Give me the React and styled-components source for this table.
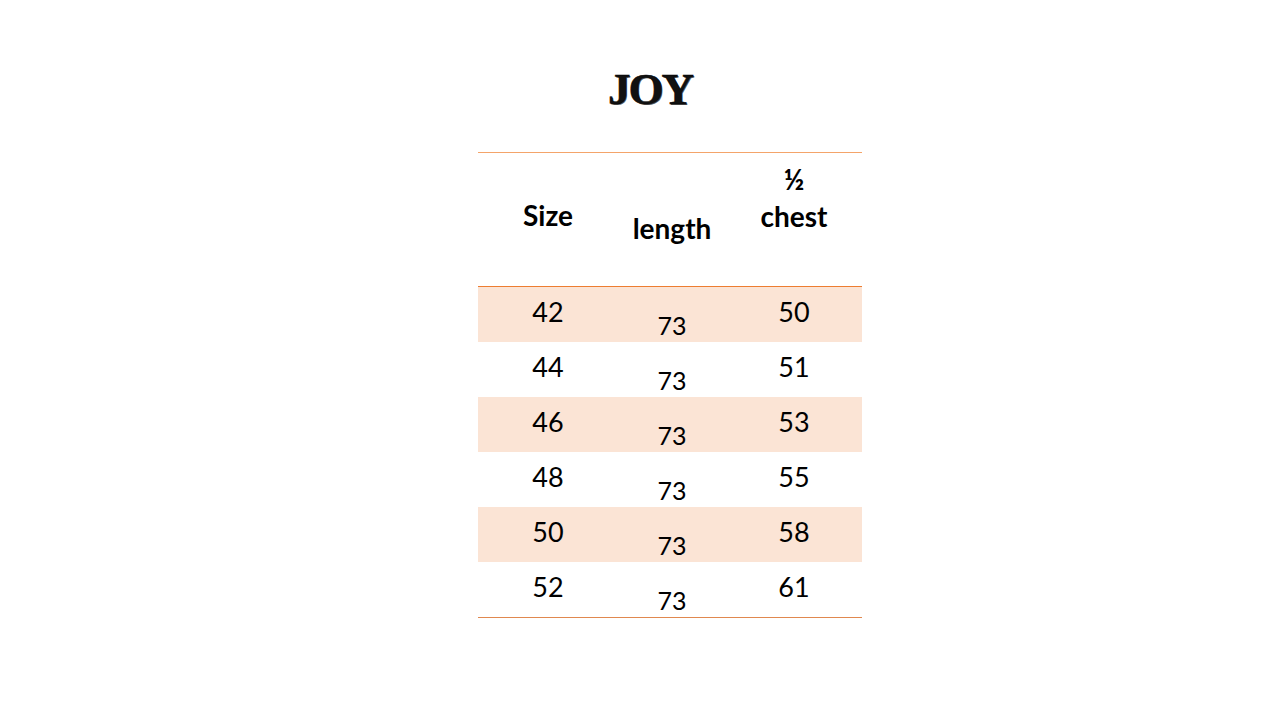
import styled, { createGlobalStyle } from "styled-components"

const GlobalStyle = createGlobalStyle`
    html, body {
        margin: 0;
        padding: 0;
        background-color: #FFFFFF;
    }
`;

const rows = [
    { size: 42, length: 73, chest: 50 },
    { size: 44, length: 73, chest: 51 },
    { size: 46, length: 73, chest: 53 },
    { size: 48, length: 73, chest: 55 },
    { size: 50, length: 73, chest: 58 },
    { size: 52, length: 73, chest: 61 },
];

export default function App() {
    return (
        <Page>
            <GlobalStyle />
            <Sheet>
                <Titulo>JOY</Titulo>
                <Tabela>
                    <HeaderRow>
                        <HeaderCell $offset={-8}>Size</HeaderCell>
                        <HeaderCell $offset={18}>length</HeaderCell>
                        <HeaderCell $offset={-44}>
                            <span>½</span>
                            <span>chest</span>
                        </HeaderCell>
                    </HeaderRow>
                    {rows.map((row, i) => (
                        <Row key={row.size} $shaded={i % 2 === 0}>
                            <Cell>{row.size}</Cell>
                            <Cell $low>{row.length}</Cell>
                            <Cell>{row.chest}</Cell>
                        </Row>
                    ))}
                </Tabela>
            </Sheet>
        </Page>
    )
}

const Page = styled.main`
    width: 1280px;
    height: 720px;
    box-sizing: border-box;
    padding: 62px 0 0 478px;
    background-color: #FFFFFF;
`;

const Sheet = styled.section`
    width: 384px;
    display: flex;
    flex-direction: column;
`;

const Titulo = styled.h1`
    margin: 0;
    height: 90px;
    padding-right: 40px;
    text-align: center;
    font-family: 'Liberation Serif', 'DejaVu Serif', serif;
    font-size: 45px;
    font-weight: 700;
    line-height: 54px;
    letter-spacing: -2px;
    color: #111111;
    -webkit-text-stroke: 0.5px #000000;
    text-shadow: 1px 1px 0 #555555;
`;

const Tabela = styled.div`
    display: flex;
    flex-direction: column;
    border-top: 1px solid #F4A46A;
    border-bottom: 1px solid #E0884F;
    font-family: Lato, 'Open Sans', sans-serif;
    color: #000000;
`;

const HeaderRow = styled.div`
    height: 133px;
    display: grid;
    grid-template-columns: 140px 108px 136px;
    border-bottom: 1px solid #ED7D31;
`;

const HeaderCell = styled.div`
    display: flex;
    flex-direction: column;
    align-items: center;
    justify-content: center;
    padding-top: ${({ $offset }) => ($offset > 0 ? $offset : 0)}px;
    padding-bottom: ${({ $offset }) => ($offset < 0 ? -$offset : 0)}px;
    font-size: 28px;
    font-weight: 700;
    line-height: 37px;
    white-space: nowrap;
`;

const Row = styled.div`
    height: 55px;
    display: grid;
    grid-template-columns: 140px 108px 136px;
    background-color: ${({ $shaded }) => ($shaded ? "#FBE4D5" : "#FFFFFF")};
`;

const Cell = styled.div`
    display: flex;
    justify-content: center;
    align-items: center;
    padding-top: ${({ $low }) => ($low ? "20px" : "0")};
    padding-bottom: ${({ $low }) => ($low ? "0" : "7px")};
    font-size: ${({ $low }) => ($low ? "25px" : "27px")};
    font-weight: 400;
`;
